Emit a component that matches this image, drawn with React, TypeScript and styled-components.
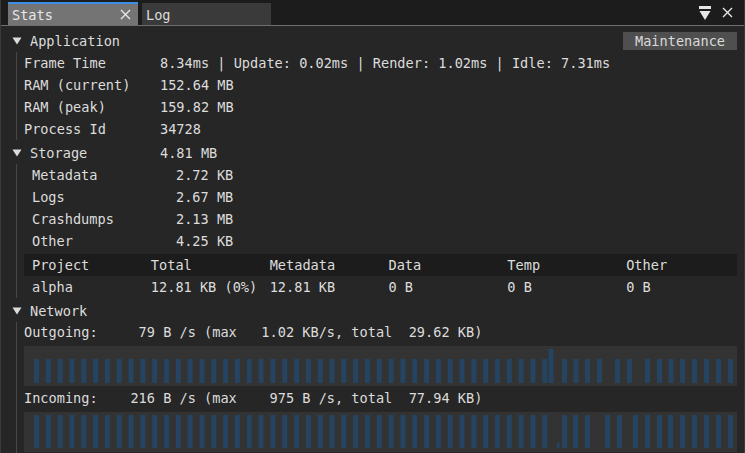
import React from 'react';
import styled, { createGlobalStyle } from 'styled-components';

const GlobalStyle = createGlobalStyle`
  html, body {
    margin: 0;
    padding: 0;
    background: #262626;
  }
  body {
    font-family: "DejaVu Sans Mono", "Liberation Mono", monospace;
  }
`;

const Window = styled.div`
  width: 745px;
  height: 453px;
  box-sizing: border-box;
  overflow: hidden;
  background: #262626;
  border-left: 1px solid #3a3a3a;
  border-right: 1px solid #3a3a3a;
  color: #dcdcdc;
  font-size: 13.6px;
  display: flex;
  flex-direction: column;
`;

const TabBar = styled.div`
  display: flex;
  align-items: flex-end;
  height: 25px;
  flex-shrink: 0;
  padding: 0 11px 0 7px;
  background: #1c1c1c;
  border-bottom: 1px solid #6e6e6e;
`;

const Tab = styled.div<{ $active?: boolean; $width: number }>`
  display: flex;
  align-items: center;
  box-sizing: border-box;
  width: ${p => p.$width}px;
  height: ${p => (p.$active ? 23 : 22)}px;
  margin-right: 4px;
  padding: 0 7px 0 4px;
  background: ${p => (p.$active ? '#747474' : '#3a3a3a')};
  border-top: 2px solid ${p => (p.$active ? '#3d8ee6' : '#3a3a3a')};
  color: ${p => (p.$active ? '#e8e8e8' : '#dcdcdc')};
`;

const TabLabel = styled.span`
  flex: 1;
`;

const TabIcons = styled.div`
  margin-left: auto;
  display: flex;
  align-items: center;
  gap: 11px;
  height: 25px;
`;

const Content = styled.div`
  display: flex;
  flex-direction: column;
  padding: 4px 7px 0 11px;
`;

const TreeHeader = styled.div<{ $gap?: number }>`
  display: flex;
  align-items: center;
  height: 22px;
  margin-top: ${p => p.$gap ?? 0}px;
`;

const Arrow = styled.span`
  display: flex;
  align-items: center;
  width: 18px;
  flex-shrink: 0;
`;

const HeaderLabel = styled.span<{ $width?: number }>`
  width: ${p => (p.$width ? `${p.$width}px` : 'auto')};
`;

const Children = styled.div`
  display: flex;
  flex-direction: column;
  margin-left: 4px;
  padding-left: 7px;
  border-left: 1px solid #474747;
`;

const StatRow = styled.div<{ $label: number; $indent?: number }>`
  display: grid;
  grid-template-columns: ${p => p.$label}px 1fr;
  align-items: center;
  height: 22px;
  padding-left: ${p => p.$indent ?? 0}px;
  white-space: pre;
`;

const Button = styled.div`
  margin-left: auto;
  width: 114px;
  height: 18px;
  display: flex;
  align-items: center;
  justify-content: center;
  background: #4f4f4f;
  color: #dadada;
`;

const Table = styled.div`
  display: flex;
  flex-direction: column;
  margin-top: 2px;
`;

const TableRow = styled.div<{ $header?: boolean }>`
  display: grid;
  grid-template-columns: repeat(6, 1fr);
  align-items: center;
  height: 22px;
  background: ${p => (p.$header ? '#1c1c1c' : 'transparent')};
`;

const Cell = styled.span`
  padding-left: 8px;
  white-space: pre;
`;

const NetLine = styled.div<{ $gap: number }>`
  height: 20px;
  display: flex;
  align-items: center;
  margin-top: ${p => p.$gap}px;
  white-space: pre;
`;

const PlotFrame = styled.div`
  height: 40px;
  margin-top: 4px;
  background: #333333;
`;

type Bar = { x: number; top: number; h: number; w?: number };

const STEP = 11.82;

const regular = (top: number, h: number): Bar[] =>
  Array.from({ length: 44 }, (_, i) => ({ x: 10 + i * STEP, top, h }));

const outgoingBars: Bar[] = [
  ...regular(13, 24),
  { x: 524.5, top: 3, h: 34 },
  ...[538, 549.5, 561, 573, 591, 603, 621, 633, 644.5, 656, 668, 680, 692, 704].map(x => ({ x, top: 13, h: 24 })),
];

const incomingBars: Bar[] = [
  ...regular(3, 33),
  { x: 532.7, top: 31, h: 5, w: 3 },
  ...[538, 549, 561, 581, 593, 609, 621, 633, 644, 656, 668, 680, 692, 704].map(x => ({ x, top: 3, h: 33 })),
];

const Histogram: React.FC<{ bars: Bar[] }> = ({ bars }) => (
  <PlotFrame>
    <svg width="713" height="40" style={{ display: 'block' }}>
      {bars.map((b, i) => (
        <rect key={i} x={b.x} y={b.top} width={b.w ?? 5} height={b.h} fill="#254461" />
      ))}
    </svg>
  </PlotFrame>
);

const TreeArrow = () => (
  <Arrow>
    <svg width="10" height="8">
      <polygon points="0.5,0.5 9.5,0.5 5,7.5" fill="#dcdcdc" />
    </svg>
  </Arrow>
);

const CloseIcon: React.FC<{ size?: number }> = ({ size = 11 }) => (
  <svg width={size} height={size}>
    <path d={`M1 1 L${size - 1} ${size - 1} M${size - 1} 1 L1 ${size - 1}`} stroke="#e6e6e6" strokeWidth="1.4" />
  </svg>
);

const MenuIcon = () => (
  <svg width="12" height="15" style={{ marginTop: 1 }}>
    <rect x="0" y="0" width="12" height="3" fill="#e6e6e6" />
    <polygon points="0.5,5 11.5,5 6,14" fill="#e6e6e6" />
  </svg>
);

const appStats = [
  ['Frame Time', '8.34ms | Update: 0.02ms | Render: 1.02ms | Idle: 7.31ms'],
  ['RAM (current)', '152.64 MB'],
  ['RAM (peak)', '159.82 MB'],
  ['Process Id', '34728'],
];

const storageStats = [
  ['Metadata', '2.72 KB'],
  ['Logs', '2.67 MB'],
  ['Crashdumps', '2.13 MB'],
  ['Other', '4.25 KB'],
];

const columns = ['Project', 'Total', 'Metadata', 'Data', 'Temp', 'Other'];
const projectRow = ['alpha', '12.81 KB (0%)', '12.81 KB', '0 B', '0 B', '0 B'];

const App: React.FC = () => (
  <>
    <GlobalStyle />
    <Window>
      <TabBar>
        <Tab $active $width={130}>
          <TabLabel>Stats</TabLabel>
          <CloseIcon />
        </Tab>
        <Tab $width={129}>
          <TabLabel>Log</TabLabel>
        </Tab>
        <TabIcons>
          <MenuIcon />
          <CloseIcon />
        </TabIcons>
      </TabBar>

      <Content>
        <TreeHeader>
          <TreeArrow />
          <HeaderLabel>Application</HeaderLabel>
          <Button>Maintenance</Button>
        </TreeHeader>
        <Children>
          {appStats.map(([label, value]) => (
            <StatRow key={label} $label={136}>
              <span>{label}</span>
              <span>{value}</span>
            </StatRow>
          ))}
        </Children>

        <TreeHeader $gap={2}>
          <TreeArrow />
          <HeaderLabel $width={130}>Storage</HeaderLabel>
          <span>4.81 MB</span>
        </TreeHeader>
        <Children>
          {storageStats.map(([label, value]) => (
            <StatRow key={label} $label={144} $indent={8}>
              <span>{label}</span>
              <span>{value}</span>
            </StatRow>
          ))}
          <Table>
            <TableRow $header>
              {columns.map(c => <Cell key={c}>{c}</Cell>)}
            </TableRow>
            <TableRow>
              {projectRow.map((c, i) => <Cell key={i}>{c}</Cell>)}
            </TableRow>
          </Table>
        </Children>

        <TreeHeader $gap={2}>
          <TreeArrow />
          <HeaderLabel>Network</HeaderLabel>
        </TreeHeader>
        <Children>
          <NetLine $gap={0}>{'Outgoing:     79 B /s (max   1.02 KB/s, total  29.62 KB)'}</NetLine>
          <Histogram bars={outgoingBars} />
          <NetLine $gap={2}>{'Incoming:    216 B /s (max    975 B /s, total  77.94 KB)'}</NetLine>
          <Histogram bars={incomingBars} />
          <NetLine $gap={2}>{' '}</NetLine>
        </Children>
      </Content>
    </Window>
  </>
);

export default App;
